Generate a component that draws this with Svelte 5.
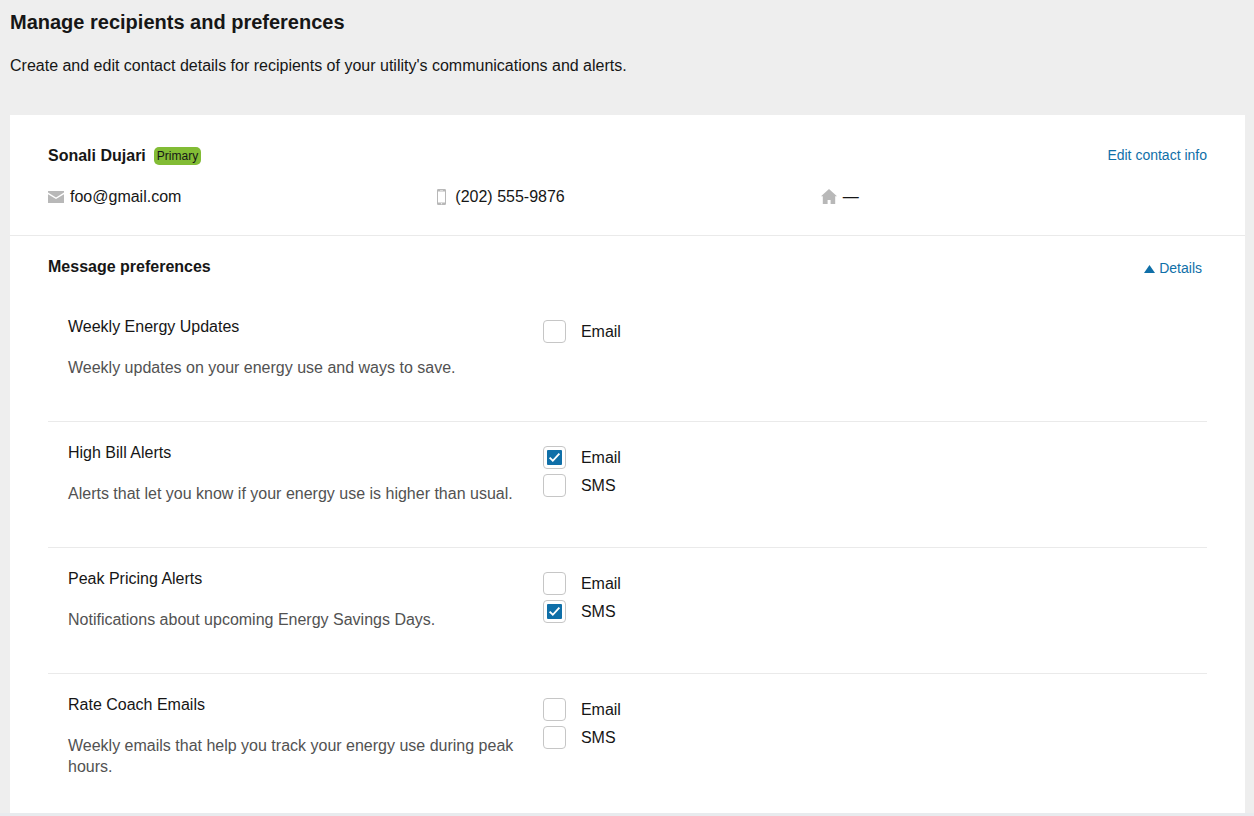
<script>
  const contact = {
    name: 'Sonali Dujari',
    email: 'foo@gmail.com',
    mobile: '(202) 555-9876',
    home: '—'
  };

  let expanded = $state(true);

  let messages = $state([
    {
      id: 'weekly',
      title: 'Weekly Energy Updates',
      description: 'Weekly updates on your energy use and ways to save.',
      channels: [{ label: 'Email', checked: false }]
    },
    {
      id: 'high-bill',
      title: 'High Bill Alerts',
      description: 'Alerts that let you know if your energy use is higher than usual.',
      channels: [
        { label: 'Email', checked: true },
        { label: 'SMS', checked: false }
      ]
    },
    {
      id: 'peak-pricing',
      title: 'Peak Pricing Alerts',
      description: 'Notifications about upcoming Energy Savings Days.',
      channels: [
        { label: 'Email', checked: false },
        { label: 'SMS', checked: true }
      ]
    },
    {
      id: 'rate-coach',
      title: 'Rate Coach Emails',
      description: 'Weekly emails that help you track your energy use during peak hours.',
      channels: [
        { label: 'Email', checked: false },
        { label: 'SMS', checked: false }
      ]
    }
  ]);
</script>

<main class="page">
  <header class="page-header">
    <h1>Manage recipients and preferences</h1>
    <p>Create and edit contact details for recipients of your utility's communications and alerts.</p>
  </header>

  <div class="card">
    <section class="recipient">
      <div class="recipient-header">
        <h2>{contact.name}</h2>
        <span class="badge">Primary</span>
        <a class="edit-link" href="#edit">Edit contact info</a>
      </div>
      <div class="contact-list">
        <div class="contact-item">
          <svg width="16" height="12" viewBox="0 0 16 12" aria-hidden="true">
            <path d="M0 0h16v1.6L8 6.4 0 1.6z" />
            <path d="M0 3.2l8 4.8 8-4.8V12H0z" />
          </svg>
          <span>{contact.email}</span>
        </div>
        <div class="contact-item">
          <svg class="mobile" width="9" height="16" viewBox="0 0 9 16" aria-hidden="true">
            <path
              fill-rule="evenodd"
              d="M1.2 0h6.6Q9 0 9 1.2v13.6Q9 16 7.8 16H1.2Q0 16 0 14.8V1.2Q0 0 1.2 0zM1 2.6v10.8h7V2.6zM3 1v.6h3V1zM3.9 14.3v.9h1.2v-.9z"
            />
          </svg>
          <span>{contact.mobile}</span>
        </div>
        <div class="contact-item">
          <svg width="16" height="15" viewBox="0 0 16 15" aria-hidden="true">
            <path d="M8 0l8 7.2h-1.8V15H9.6v-4H6.6v4H1.8V7.2H0z" />
          </svg>
          <span>{contact.home}</span>
        </div>
      </div>
    </section>

    <section class="preferences">
      <div class="preferences-header">
        <h2>Message preferences</h2>
        <button class="details-btn" aria-expanded={expanded} onclick={() => (expanded = !expanded)}>
          <svg class:collapsed={!expanded} width="11" height="8" viewBox="0 0 11 8" aria-hidden="true">
            <path d="M5.5 0L11 8H0z" />
          </svg>
          Details
        </button>
      </div>

      {#if expanded}
        {#each messages as message (message.id)}
          <div class="message">
            <div class="message-text">
              <h3>{message.title}</h3>
              <p>{message.description}</p>
            </div>
            <div class="channels">
              {#each message.channels as channel (channel.label)}
                <label class="channel">
                  <input type="checkbox" bind:checked={channel.checked} />
                  <svg class="tick" width="15" height="15" viewBox="0 0 16 16" aria-hidden="true">
                    <rect width="16" height="16" rx="1" />
                    <path d="M2.8 8.2l3.4 3.3 7-7.6" />
                  </svg>
                  <span>{channel.label}</span>
                </label>
              {/each}
            </div>
          </div>
        {/each}
      {/if}
    </section>
  </div>
</main>

<style>
  :global(body) {
    background: #eeeeee;
  }

  .page {
    padding: 10px 9px 0 10px;
    border-bottom: 3px solid #e8ebee;
    font-family: 'Liberation Sans', Arial, sans-serif;
    font-size: 16px;
    line-height: 21px;
    color: #161616;
  }

  h1,
  h2,
  h3,
  p {
    margin: 0;
    font-size: 16px;
  }

  .page-header {
    padding-bottom: 39px;
  }

  h1 {
    margin-bottom: 21px;
    font-size: 20px;
    line-height: 24px;
  }

  .card {
    background: #fff;
  }

  .recipient {
    padding: 30px 38px 28px;
    border-bottom: 1px solid #eaeaea;
  }

  .recipient-header {
    display: flex;
    align-items: center;
    gap: 8px;
    margin-bottom: 20px;
  }

  .badge {
    padding: 0 3px;
    border-radius: 5px;
    background: #82bc35;
    font-size: 12px;
    line-height: 18px;
  }

  .edit-link {
    margin-left: auto;
    font-size: 14px;
    color: #0f6fa8;
    text-decoration: none;
  }

  .contact-list {
    display: grid;
    grid-template-columns: repeat(3, 1fr);
  }

  .contact-item {
    display: flex;
    align-items: center;
    gap: 6px;
  }

  .contact-item svg {
    fill: #b8b8b8;
  }

  .contact-item .mobile {
    margin: 0 3px;
  }

  .preferences {
    padding: 20px 38px 0;
  }

  .preferences-header {
    display: flex;
    align-items: flex-start;
    justify-content: space-between;
    padding-bottom: 17px;
  }

  .details-btn {
    display: flex;
    align-items: center;
    gap: 4px;
    padding: 2px 5px 0;
    border: none;
    background: none;
    font: inherit;
    font-size: 14px;
    color: #0f6fa8;
    cursor: pointer;
  }

  .details-btn svg {
    fill: #0f6fa8;
  }

  .details-btn .collapsed {
    transform: rotate(180deg);
  }

  .message {
    display: grid;
    grid-template-columns: 5fr 7fr;
    border-bottom: 1px solid #eaeaea;
  }

  .message:last-child {
    border-bottom: none;
  }

  .message-text {
    padding: 20px 8px 43px 20px;
  }

  .message:last-child .message-text {
    padding-bottom: 36px;
  }

  h3 {
    margin-bottom: 20px;
    font-weight: normal;
  }

  .message-text p {
    color: #525252;
  }

  .channels {
    display: flex;
    flex-direction: column;
    align-items: flex-start;
    gap: 5px;
    padding: 24px 12px;
  }

  .channel {
    display: grid;
    grid-template-columns: 23px auto;
    align-items: center;
    column-gap: 15px;
    cursor: pointer;
  }

  .channel input {
    grid-area: 1 / 1;
    appearance: none;
    box-sizing: border-box;
    width: 23px;
    height: 23px;
    margin: 0;
    border: 1px solid #c6c6c6;
    border-radius: 4px;
    background: #fff;
  }

  .tick {
    grid-area: 1 / 1;
    justify-self: center;
    visibility: hidden;
    pointer-events: none;
    fill: #0f6fa8;
  }

  .tick path {
    fill: none;
    stroke: #fff;
    stroke-width: 2;
  }

  input:checked + .tick {
    visibility: visible;
  }
</style>
